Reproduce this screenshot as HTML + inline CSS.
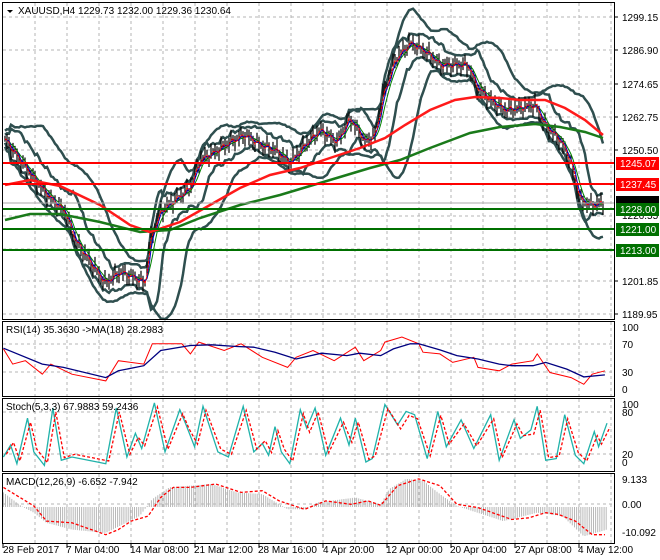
<!DOCTYPE html>
<html><head><meta charset="utf-8"><style>
html,body{margin:0;padding:0;background:#fff;width:660px;height:560px;overflow:hidden}
svg{display:block;font-family:"Liberation Sans",sans-serif;font-size:10px}
</style></head><body>
<svg id="s" width="660" height="560" xmlns="http://www.w3.org/2000/svg">
<rect width="660" height="560" fill="#fff"/>
<g id="grid" stroke="#b4b4b4" stroke-dasharray="3,3" stroke-width="1"></g>
<g id="main"></g>
<polyline fill="none" stroke="#1a7a1a" stroke-width="2.5" points="5,220 30,214 60,214 100,222 140,232 170,230 200,218 240,205 280,195 330,180 370,168 400,160 430,148 470,133 500,127 535,124 560,127 585,132 603,138"/>
<polyline fill="none" stroke="#ff1a1a" stroke-width="2.5" points="5,185 30,180 60,186 100,205 130,225 150,232 180,222 210,205 240,188 270,175 300,168 330,158 360,148 385,138 405,125 430,110 455,100 475,97 500,98 520,100 545,100 565,108 585,120 603,135"/>
<g stroke-width="2">
<line x1="2" y1="163" x2="614" y2="163" stroke="#ff0000"/>
<line x1="2" y1="184" x2="614" y2="184" stroke="#ff0000"/>
<line x1="2" y1="209" x2="614" y2="209" stroke="#007000"/>
<line x1="2" y1="229" x2="614" y2="229" stroke="#007000"/>
<line x1="2" y1="250" x2="614" y2="250" stroke="#007000"/>
</g>
<line x1="2" y1="203" x2="614" y2="203" stroke="#aaa" stroke-width="1"/>
<g id="ind"></g>
<g fill="none" stroke="#000" stroke-width="1">
<rect x="2.5" y="2.5" width="612" height="317"/>
<rect x="2.5" y="321.5" width="612" height="75"/>
<rect x="2.5" y="398.5" width="612" height="73"/>
<rect x="2.5" y="473.5" width="612" height="70"/>
</g>
<g id="ticks" stroke="#000"></g>
<polygon points="7,10 13,10 10,13" fill="#000"/>
<text x="18" y="14">XAUUSD,H4  1229.73 1232.00 1229.36 1230.64</text>
<text x="6" y="333">RSI(14) 35.3630  -&gt;MA(18) 28.2983</text>
<text x="6" y="410">Stoch(5,3,3) 67.9883 59.2436</text>
<text x="6" y="485">MACD(12,26,9) -6.652 -7.942</text>
<g fill="#000">
<text x="622" y="21">1299.15</text>
<text x="622" y="54">1286.90</text>
<text x="622" y="88">1274.65</text>
<text x="622" y="121">1262.75</text>
<text x="622" y="154">1250.50</text>
<text x="622" y="285">1201.85</text>
<text x="622" y="318">1189.95</text>
<text x="622" y="203">1230.64</text>
<text x="622" y="219">1226.55</text>
<text x="622" y="331">100</text><text x="622" y="348">70</text><text x="622" y="376">30</text><text x="622" y="393">0</text>
<text x="622" y="408">100</text><text x="622" y="416">80</text><text x="622" y="458">20</text><text x="622" y="466">0</text>
<text x="622" y="483">9.133</text><text x="622" y="508">0.00</text><text x="622" y="536">-10.092</text>
</g>
<rect x="616" y="157" width="43" height="13" fill="#ff0000"/><text x="620" y="167" fill="#fff">1245.07</text>
<rect x="616" y="178" width="43" height="13" fill="#ff0000"/><text x="620" y="188" fill="#fff">1237.45</text>
<rect x="616" y="196" width="43" height="9" fill="#000"/>
<rect x="616" y="203" width="43" height="13" fill="#007000"/><text x="620" y="213" fill="#fff">1228.00</text>
<rect x="616" y="223" width="43" height="13" fill="#007000"/><text x="620" y="233" fill="#fff">1221.00</text>
<rect x="616" y="244" width="43" height="13" fill="#007000"/><text x="620" y="254" fill="#fff">1213.00</text>
<g fill="#000">
<text x="3" y="553">28 Feb 2017</text><text x="66" y="553">7 Mar 04:00</text><text x="130" y="553">14 Mar 08:00</text>
<text x="194" y="553">21 Mar 12:00</text><text x="258" y="553">28 Mar 16:00</text><text x="323" y="553">4 Apr 20:00</text>
<text x="386" y="553">12 Apr 00:00</text><text x="450" y="553">20 Apr 04:00</text><text x="515" y="553">27 Apr 08:00</text>
<text x="578" y="553">4 May 12:00</text>
</g>
</svg>
<script>
var NS="http://www.w3.org/2000/svg";
function el(p,t,a){var e=document.createElementNS(NS,t);for(var k in a)e.setAttribute(k,a[k]);p.appendChild(e);return e;}
var grid=document.getElementById('grid');
for(var x=35;x<614;x+=32){[[3,319],[322,396],[399,471],[474,543]].forEach(function(r){el(grid,'line',{x1:x,y1:r[0],x2:x,y2:r[1]});});}
[17,50,84,117,150,184,216,249,281,314].forEach(function(y){el(grid,'line',{x1:3,y1:y,x2:614,y2:y});});
[344,372,412,454,504].forEach(function(y){el(grid,'line',{x1:3,y1:y,x2:614,y2:y});});
var ticks=document.getElementById('ticks');
for(var x=3;x<614;x+=64){el(ticks,'line',{x1:x,y1:544,x2:x,y2:548});}
[17,50,84,117,150,281,314].forEach(function(y){el(ticks,'line',{x1:614,y1:y,x2:618,y2:y});});
function interp(kp,x){for(var i=0;i<kp.length-1;i++){if(x<=kp[i+1][0]){var a=kp[i],b=kp[i+1];return a[1]+(b[1]-a[1])*(x-a[0])/(b[0]-a[0]);}}return kp[kp.length-1][1];}
var kp=[[5,140],[20,160],[35,180],[50,198],[65,212],[75,240],[90,262],[105,283],[120,272],[135,278],[145,283],[150,240],[160,212],[175,200],[190,188],[200,160],[215,152],[230,142],[245,135],[260,145],[275,150],[290,163],[305,145],[320,130],[337,142],[350,118],[365,142],[375,135],[383,95],[395,60],[410,43],[420,48],[430,55],[440,65],[465,65],[470,68],[475,85],[490,100],[505,110],[520,108],[535,105],[545,125],[560,140],[570,160],[580,200],[590,205],[603,203]];
var xs=[],ys=[];
for(var x=5;x<=603;x+=2){xs.push(x);ys.push(interp(kp,x)+3*Math.sin(x*0.7)+3*Math.sin(x*1.9));}
var main=document.getElementById('main');
function ma(arr,n){return arr.map(function(v,i){var s=0,c=0;for(var j=Math.max(0,i-n+1);j<=i;j++){s+=arr[j];c++;}return s/c;});}
function sd(arr,m,n){return arr.map(function(v,i){var s=0,c=0;for(var j=Math.max(0,i-n+1);j<=i;j++){s+=(arr[j]-m[i])*(arr[j]-m[i]);c++;}return Math.sqrt(s/c);});}
function pl(arr,col,w,dash){var p=arr.map(function(v,i){return xs[i]+','+v.toFixed(1);}).join(' ');var a={points:p,fill:'none',stroke:col,'stroke-width':w};if(dash)a['stroke-dasharray']=dash;el(main,'polyline',a);}
var m20=ma(ys,20),s20=sd(ys,m20,20);
var m10=ma(ys,8),s10=sd(ys,m10,8);
pl(m20.map(function(v,i){return v-2*s20[i]-8;}),'#2f4f4f',2.5);
pl(m20.map(function(v,i){return v+2*s20[i]+8;}),'#2f4f4f',2.5);
pl(m10.map(function(v,i){return v-2*s10[i]-4;}),'#2f4f4f',2.5);
pl(m10.map(function(v,i){return v+2*s10[i]+4;}),'#2f4f4f',2.5);
var d='';
for(var i=0;i<xs.length;i++){var h=3+5*Math.abs(Math.sin(i*1.3));d+='M'+xs[i]+' '+(ys[i]-h).toFixed(1)+'V'+(ys[i]+h).toFixed(1);}
el(main,'path',{d:d,stroke:'#000','stroke-width':1.2,fill:'none'});
pl(ma(ys,5),'#008000',1);pl(ma(ys,3),'#0000c0',1);pl(ma(ys,2),'#ff0000',1,'3,1');
var ind=document.getElementById('ind');
function zp(k){return k.map(function(p){return (p[0]/2.364).toFixed(1)+','+(310+p[1]/2.96).toFixed(1);}).join(' ');}
function zl(k,col,w,dash){var a={points:zp(k),fill:'none',stroke:col,'stroke-width':w};if(dash)a['stroke-dasharray']=dash;el(ind,'polyline',a);}
var hk=[[8,540],[50,580],[80,600],[110,630],[170,650],[250,660],[330,610],[360,560],[400,525],[500,515],[560,540],[620,545],[680,590],[720,590],[750,570],[840,555],[900,575],[920,530],[960,500],[1000,505],[1040,545],[1080,580],[1190,625],[1270,600],[1330,610],[1380,670],[1435,650]];
var hd='',z=310+583/2.96;
for(var X=8;X<=1435;X+=5){var v=310+interp(hk,X)/2.96;hd+='M'+(X/2.364).toFixed(1)+' '+z.toFixed(1)+'V'+v.toFixed(1);}
el(ind,'path',{d:hd,stroke:'#b8b8b8','stroke-width':1,fill:'none'});
zl([[8,525],[80,580],[110,625],[170,630],[250,665],[280,650],[310,625],[350,610],[380,555],[410,525],[450,525],[510,515],[570,540],[620,535],[660,565],[720,590],[770,565],[830,575],[870,565],[900,578],[940,520],[990,500],[1040,520],[1080,575],[1130,585],[1210,620],[1250,615],[1290,600],[1320,605],[1360,625],[1400,665],[1430,665]],'#ff0000',1.3,'3,2');
zl([[8,115],[30,160],[60,150],[100,190],[120,160],[170,190],[250,210],[280,150],[340,160],[360,100],[430,100],[450,130],[470,95],[530,120],[570,100],[620,140],[680,170],[700,140],[740,120],[790,150],[840,110],[860,150],[900,120],[910,95],[950,80],[990,100],[1000,125],[1040,130],[1070,155],[1120,140],[1130,170],[1180,180],[1210,160],[1260,150],[1270,130],[1300,185],[1350,200],[1380,220],[1400,190],[1430,180]],'#ff0000',1);
zl([[8,113],[100,160],[150,170],[250,200],[280,180],[340,165],[380,120],[450,105],[500,103],[560,108],[600,110],[650,125],[700,145],[760,128],[820,135],[850,128],[900,135],[930,115],[970,100],[990,100],[1040,118],[1080,135],[1130,145],[1180,160],[1210,165],[1260,165],[1290,155],[1340,175],[1380,198],[1430,192]],'#000080',1.3);
var st=[[8,435],[25,400],[40,455],[65,320],[80,420],[105,460],[125,290],[145,445],[170,435],[230,450],[250,455],[275,290],[300,435],[320,365],[335,410],[365,275],[390,420],[425,295],[440,340],[460,405],[480,285],[515,420],[540,435],[575,285],[600,420],[620,395],[635,430],[650,345],[665,420],[685,455],[710,295],[725,350],[745,290],[770,430],[805,320],[825,400],[840,320],[865,450],[880,440],[910,280],[940,340],[960,300],[980,310],[1010,440],[1035,300],[1055,405],[1090,325],[1120,410],[1160,310],[1180,445],[1215,325],[1230,380],[1255,355],[1270,285],[1290,445],[1315,440],[1335,310],[1360,430],[1380,455],[1405,360],[1415,405],[1435,335]];
zl(st,'#20b2aa',1.3);
zl(st.map(function(p){return [p[0]+7,p[1]+(p[1]<370?12:-8)];}),'#ff0000',1.3,'3,2');
</script>
</body></html>
